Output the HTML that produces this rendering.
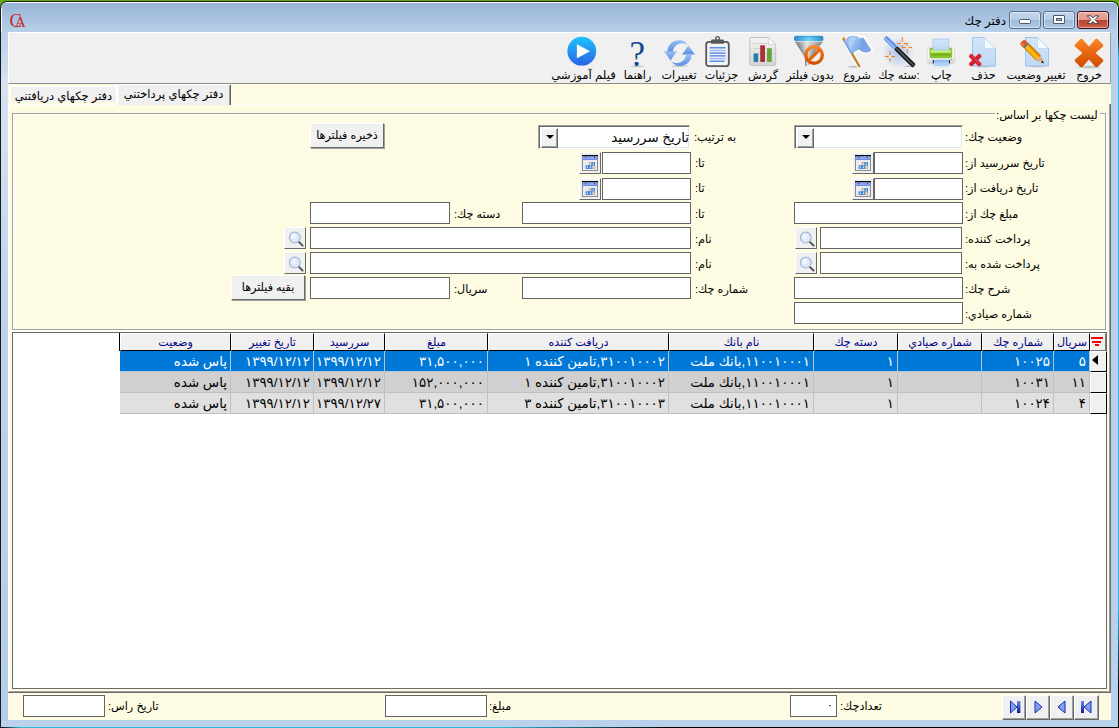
<!DOCTYPE html>
<html lang="fa"><head><meta charset="utf-8"><title>دفتر چك</title><style>
html,body{margin:0;padding:0;}
body{width:1119px;height:728px;overflow:hidden;position:relative;background:#b9d1ea;
 font-family:"Liberation Sans","DejaVu Sans",sans-serif;font-size:11.2px;color:#000;}
div,span,svg{position:absolute;box-sizing:border-box;}
.t{white-space:nowrap;direction:rtl;line-height:14px;height:14px;}
.inp{background:#fff;border:1px solid #646464;}
.btn{background:#f0f0f0;border:1px solid;border-color:#fff #696969 #696969 #fff;box-shadow:1px 1px 0 #a0a0a0;}
.btn2{background:#f0f0f0;border:1px solid;border-color:#fff #696969 #696969 #fff;}
.btxt{width:100%;text-align:center;direction:rtl;line-height:14px;white-space:nowrap;}
.hd{background:#f0f0f0;border:1px solid;border-color:#fff #000 #000 #fff;color:#000080;text-align:center;direction:rtl;line-height:16px;white-space:nowrap;overflow:hidden;}
.c{font-size:13.4px;line-height:22px;direction:rtl;text-align:right;white-space:nowrap;overflow:hidden;border-right:1px solid #c0c0c0;border-bottom:1px solid #c0c0c0;padding-right:3px;}
.tl{width:120px;text-align:center;direction:rtl;white-space:nowrap;line-height:14px;height:14px;top:68px;}
</style></head><body>
<div style="left:0;top:0;width:1119px;height:2px;background:linear-gradient(#6db30f,#4f9a0a)"></div>
<div style="left:0;top:0;width:9px;height:9px;background:#63ab0d"></div>
<div style="left:1110px;top:0;width:9px;height:9px;background:#63ab0d"></div>
<div style="left:0;top:1px;width:1119px;height:727px;background:#1a1a1a;border-radius:7px 7px 0 0"></div>
<div style="left:1px;top:2px;width:1117px;height:725px;background:#fff;border-radius:6px 6px 0 0"></div>
<div style="left:1px;top:3px;width:1117px;height:724px;background:linear-gradient(#98b3d3 0px,#a9c3e0 16px,#b9d1ea 30px,#b9d1ea 100%);border-radius:5px 5px 0 0"></div>
<div style="left:1px;top:8px;width:1px;height:400px;background:linear-gradient(#fff,rgba(255,255,255,.0))"></div>
<div style="left:1117px;top:7px;width:1px;height:60px;background:linear-gradient(#d8f2fc,rgba(200,236,250,0))"></div>
<div style="left:1px;top:32px;width:7px;height:688px;background:linear-gradient(#b9d1ea 0,#d4e2f2 50px,#d0dff1 120px,#bcd3eb 300px,#b4cde9 100%)"></div>
<div style="left:1118px;top:8px;width:1px;height:719px;background:linear-gradient(#000 0,#000 28px,#35b5e5 50px,#35b5e5 600px,#000 680px,#000 100%)"></div>
<div style="left:0;top:727px;width:1119px;height:1px;background:linear-gradient(90deg,#000 0,#2fb5d5 20px,#2fb5d5 45%,#000 60%)"></div>
<svg style="left:8px;top:9px" width="24" height="22" viewBox="0 0 24 22"><g font-family="Liberation Serif,serif" fill="#c9252c"><text x="1.4" y="17.6" font-size="18.5">C</text><text x="6.8" y="17.6" font-size="15.5">A</text></g></svg>
<div class="t" style="left:940px;width:66px;top:13px;font-size:11.8px;line-height:16px;height:16px;text-align:right">دفتر چك</div>
<div style="left:1009px;top:11px;width:32px;height:18px;border:1px solid #5a6f8c;border-radius:3px;background:linear-gradient(#c3d6ec 0,#b6cce6 48%,#9fb9d8 52%,#b3cae5 100%);box-shadow:inset 0 0 0 1px rgba(255,255,255,.45)"><div style="left:9px;top:7px;width:12px;height:5px;background:#fff;border:1px solid #4a5a70;border-radius:1.5px"></div></div>
<div style="left:1043px;top:11px;width:32px;height:18px;border:1px solid #5a6f8c;border-radius:3px;background:linear-gradient(#c3d6ec 0,#b6cce6 48%,#9fb9d8 52%,#b3cae5 100%);box-shadow:inset 0 0 0 1px rgba(255,255,255,.45)"><div style="left:9px;top:3px;width:12px;height:9px;background:#fff;border:1px solid #4a5a70;border-radius:1px"></div><div style="left:12px;top:6px;width:6px;height:3px;background:#a8c0dc;border:1px solid #4a5a70"></div></div>
<div style="left:1077px;top:11px;width:32px;height:18px;border:1px solid #3f1019;border-radius:3px;background:linear-gradient(#e9a99b 0,#e39a89 48%,#b9432b 52%,#c8604a 100%);box-shadow:inset 0 0 0 1px rgba(255,255,255,.45)"><svg style="left:8px;top:3px" width="14" height="10" viewBox="0 0 14 10"><path d="M1.2 0.8 L4.9 0.8 L7 2.9 L9.1 0.8 L12.8 0.8 L9 4.7 L12.8 8.6 L9.1 8.6 L7 6.5 L4.9 8.6 L1.2 8.6 L5 4.7 Z" fill="#fff" stroke="#4a3a44" stroke-width="1" stroke-linejoin="round"/></svg></div>
<div id="client" style="left:8px;top:32px;width:1103px;height:688px;background:#fdfbe2"></div>
<div style="left:8px;top:32px;width:1103px;height:52px;background:#f0f0f0;border-top:1px solid #fff;border-left:1px solid #fff;border-bottom:1px solid #8c8c8c;border-right:1px solid #a0a0a0"></div>
<div class="tl" style="left:1029px">خروج</div>
<div class="tl" style="left:976px">تغيير وضعيت</div>
<div class="tl" style="left:923.5px">حذف</div>
<div class="tl" style="left:881.5px">چاپ</div>
<div class="tl" style="left:839px">:سته چك</div>
<div class="tl" style="left:797px">شروع</div>
<div class="tl" style="left:750px">بدون فيلتر</div>
<div class="tl" style="left:703px">گردش</div>
<div class="tl" style="left:661.5px">جزئيات</div>
<div class="tl" style="left:619px">تغييرات</div>
<div class="tl" style="left:577.5px">راهنما</div>
<div class="tl" style="left:523.5px;font-size:11.7px">فيلم آموزشي</div>
<div style="left:10px;top:86px;width:107px;height:16px;background:#f0f0f0;border-top:1px solid #fff;border-left:1px solid #fff;border-right:1px solid #fff"><div class="btxt" style="top:1.5px;font-size:11.5px">دفتر چکهاي دريافتني</div></div>
<div style="left:8px;top:104px;width:1102px;height:1px;background:#fff"></div>
<div style="left:8px;top:104px;width:1px;height:587px;background:#fff"></div>
<div style="left:1109px;top:104px;width:1px;height:588px;background:#a0a0a0"></div>
<div style="left:1110px;top:104px;width:1px;height:589px;background:#696969"></div>
<div style="left:117px;top:84px;width:114px;height:21px;background:#f0f0f0;border-top:1px solid #fff;border-left:1px solid #fff"><div class="btxt" style="top:1.5px;left:-1px;font-size:11.5px">دفتر چکهاي پرداختني</div><div style="right:1px;top:0px;width:1px;height:20px;background:#a0a0a0"></div><div style="right:0;top:0;width:1px;height:20px;background:#606060"></div></div>
<div style="left:12px;top:113px;width:1095px;height:218px;border:1px solid #fff"></div>
<div style="left:12px;top:113px;width:1094px;height:217px;border:1px solid #a0a0a0"></div>
<div style="left:13px;top:114px;width:1092px;height:1px;background:#fff"></div>
<div style="left:13px;top:114px;width:1px;height:215px;background:#fff"></div>
<div class="t" style="left:995px;top:108px;padding:0 2px 0 1px;background:#fdfbe2;font-size:11.3px">ليست چكها بر اساس:</div>
<div style="left:794px;top:125px;width:169px;height:24px;background:#fff;border:1px solid;border-color:#a0a0a0 #fff #fff #a0a0a0;box-shadow:inset 1px 1px 0 #696969, inset -1px -1px 0 #e3e3e3"><div style="left:2px;top:2px;width:17px;height:20px;background:#f0f0f0;border:1px solid;border-color:#fff #696969 #696969 #fff;box-shadow:inset -1px -1px 0 #a0a0a0"><div style="left:4px;top:6px;width:0;height:0;border-left:4px solid transparent;border-right:4px solid transparent;border-top:4px solid #000"></div></div></div>
<div style="left:538px;top:125px;width:152px;height:24px;background:#fff;border:1px solid;border-color:#a0a0a0 #fff #fff #a0a0a0;box-shadow:inset 1px 1px 0 #696969, inset -1px -1px 0 #e3e3e3"><div style="left:2px;top:2px;width:17px;height:20px;background:#f0f0f0;border:1px solid;border-color:#fff #696969 #696969 #fff;box-shadow:inset -1px -1px 0 #a0a0a0"><div style="left:4px;top:6px;width:0;height:0;border-left:4px solid transparent;border-right:4px solid transparent;border-top:4px solid #000"></div></div><div class="t" style="right:0px;top:4px;font-size:13.4px;line-height:16px;height:16px">تاريخ سررسيد</div></div>
<div class="t" style="left:965px;top:130px;">وضعيت چك:</div>
<div class="t" style="left:694px;top:130px;">به ترتيب:</div>
<div class="btn" style="left:310px;top:123px;width:74px;height:25px"><div class="btxt" style="top:4px">ذخيره فيلترها</div></div>
<div class="inp" style="left:874px;top:152px;width:89px;height:22px;"></div>
<div class="btn2" style="left:852px;top:152px;width:22px;height:22px"><svg style="left:2px;top:2px" width="16" height="16" viewBox="0 0 16 16"><rect x="0.5" y="0.5" width="15" height="15" fill="#ececec" stroke="#8c8c8c"/><rect x="0" y="0" width="16" height="1.3" fill="#000"/><rect x="0.5" y="1.3" width="15" height="3.7" fill="#6d8ce4"/><rect x="1" y="2.6" width="14" height="1" fill="#a6b9f2"/><rect x="3.2" y="0.6" width="1" height="2.6" fill="#555"/><rect x="12" y="0.6" width="1" height="2.6" fill="#555"/><rect x="6.6" y="7.2" width="3.4" height="3.4" fill="#a9a9a9"/><rect x="7.699999999999999" y="8.3" width="1.3" height="1.3" fill="#fff"/><rect x="9.6" y="7.2" width="3.4" height="3.4" fill="#2e7bd6"/><rect x="10.7" y="8.3" width="1.3" height="1.3" fill="#fff"/><rect x="3.6" y="10.4" width="3.4" height="3.4" fill="#2e7bd6"/><rect x="4.7" y="11.5" width="1.3" height="1.3" fill="#fff"/><rect x="6.6" y="10.4" width="3.4" height="3.4" fill="#2e7bd6"/><rect x="7.699999999999999" y="11.5" width="1.3" height="1.3" fill="#fff"/><rect x="9.6" y="10.4" width="3.4" height="3.4" fill="#a9a9a9"/><rect x="10.7" y="11.5" width="1.3" height="1.3" fill="#fff"/></svg></div>
<div class="t" style="left:965px;top:156px;">تاريخ سررسيد از:</div>
<div class="inp" style="left:602px;top:152px;width:89px;height:22px;"></div>
<div class="btn2" style="left:579px;top:152px;width:22px;height:22px"><svg style="left:2px;top:2px" width="16" height="16" viewBox="0 0 16 16"><rect x="0.5" y="0.5" width="15" height="15" fill="#ececec" stroke="#8c8c8c"/><rect x="0" y="0" width="16" height="1.3" fill="#000"/><rect x="0.5" y="1.3" width="15" height="3.7" fill="#6d8ce4"/><rect x="1" y="2.6" width="14" height="1" fill="#a6b9f2"/><rect x="3.2" y="0.6" width="1" height="2.6" fill="#555"/><rect x="12" y="0.6" width="1" height="2.6" fill="#555"/><rect x="6.6" y="7.2" width="3.4" height="3.4" fill="#a9a9a9"/><rect x="7.699999999999999" y="8.3" width="1.3" height="1.3" fill="#fff"/><rect x="9.6" y="7.2" width="3.4" height="3.4" fill="#2e7bd6"/><rect x="10.7" y="8.3" width="1.3" height="1.3" fill="#fff"/><rect x="3.6" y="10.4" width="3.4" height="3.4" fill="#2e7bd6"/><rect x="4.7" y="11.5" width="1.3" height="1.3" fill="#fff"/><rect x="6.6" y="10.4" width="3.4" height="3.4" fill="#2e7bd6"/><rect x="7.699999999999999" y="11.5" width="1.3" height="1.3" fill="#fff"/><rect x="9.6" y="10.4" width="3.4" height="3.4" fill="#a9a9a9"/><rect x="10.7" y="11.5" width="1.3" height="1.3" fill="#fff"/></svg></div>
<div class="t" style="left:695px;top:156px;">تا:</div>
<div class="inp" style="left:874px;top:178px;width:89px;height:22px;"></div>
<div class="btn2" style="left:852px;top:178px;width:22px;height:22px"><svg style="left:2px;top:2px" width="16" height="16" viewBox="0 0 16 16"><rect x="0.5" y="0.5" width="15" height="15" fill="#ececec" stroke="#8c8c8c"/><rect x="0" y="0" width="16" height="1.3" fill="#000"/><rect x="0.5" y="1.3" width="15" height="3.7" fill="#6d8ce4"/><rect x="1" y="2.6" width="14" height="1" fill="#a6b9f2"/><rect x="3.2" y="0.6" width="1" height="2.6" fill="#555"/><rect x="12" y="0.6" width="1" height="2.6" fill="#555"/><rect x="6.6" y="7.2" width="3.4" height="3.4" fill="#a9a9a9"/><rect x="7.699999999999999" y="8.3" width="1.3" height="1.3" fill="#fff"/><rect x="9.6" y="7.2" width="3.4" height="3.4" fill="#2e7bd6"/><rect x="10.7" y="8.3" width="1.3" height="1.3" fill="#fff"/><rect x="3.6" y="10.4" width="3.4" height="3.4" fill="#2e7bd6"/><rect x="4.7" y="11.5" width="1.3" height="1.3" fill="#fff"/><rect x="6.6" y="10.4" width="3.4" height="3.4" fill="#2e7bd6"/><rect x="7.699999999999999" y="11.5" width="1.3" height="1.3" fill="#fff"/><rect x="9.6" y="10.4" width="3.4" height="3.4" fill="#a9a9a9"/><rect x="10.7" y="11.5" width="1.3" height="1.3" fill="#fff"/></svg></div>
<div class="t" style="left:965px;top:181px;">تاريخ دريافت از:</div>
<div class="inp" style="left:602px;top:178px;width:89px;height:22px;"></div>
<div class="btn2" style="left:579px;top:178px;width:22px;height:22px"><svg style="left:2px;top:2px" width="16" height="16" viewBox="0 0 16 16"><rect x="0.5" y="0.5" width="15" height="15" fill="#ececec" stroke="#8c8c8c"/><rect x="0" y="0" width="16" height="1.3" fill="#000"/><rect x="0.5" y="1.3" width="15" height="3.7" fill="#6d8ce4"/><rect x="1" y="2.6" width="14" height="1" fill="#a6b9f2"/><rect x="3.2" y="0.6" width="1" height="2.6" fill="#555"/><rect x="12" y="0.6" width="1" height="2.6" fill="#555"/><rect x="6.6" y="7.2" width="3.4" height="3.4" fill="#a9a9a9"/><rect x="7.699999999999999" y="8.3" width="1.3" height="1.3" fill="#fff"/><rect x="9.6" y="7.2" width="3.4" height="3.4" fill="#2e7bd6"/><rect x="10.7" y="8.3" width="1.3" height="1.3" fill="#fff"/><rect x="3.6" y="10.4" width="3.4" height="3.4" fill="#2e7bd6"/><rect x="4.7" y="11.5" width="1.3" height="1.3" fill="#fff"/><rect x="6.6" y="10.4" width="3.4" height="3.4" fill="#2e7bd6"/><rect x="7.699999999999999" y="11.5" width="1.3" height="1.3" fill="#fff"/><rect x="9.6" y="10.4" width="3.4" height="3.4" fill="#a9a9a9"/><rect x="10.7" y="11.5" width="1.3" height="1.3" fill="#fff"/></svg></div>
<div class="t" style="left:695px;top:181px;">تا:</div>
<div class="inp" style="left:794px;top:202px;width:169px;height:22px;"></div>
<div class="t" style="left:965px;top:207px;">مبلغ چك از:</div>
<div class="inp" style="left:522px;top:202px;width:169px;height:22px;"></div>
<div class="t" style="left:695px;top:207px;">تا:</div>
<div class="inp" style="left:310px;top:202px;width:140px;height:22px;"></div>
<div class="t" style="left:454px;top:207px;">دسته چك:</div>
<div class="inp" style="left:820px;top:227px;width:142px;height:22px;"></div>
<div class="btn2" style="left:795px;top:227px;width:22px;height:22px"><svg style="left:0;top:0" width="21" height="21" viewBox="0 0 21 21"><line x1="13.6" y1="13.6" x2="17.6" y2="17.6" stroke="#4e4e4e" stroke-width="1.9" stroke-linecap="round"/><circle cx="9.8" cy="9.6" r="5.4" fill="#dde8f9" stroke="#a4b8d4" stroke-width="1.2"/><circle cx="8.8" cy="8.4" r="2.6" fill="#f4f8ff" opacity=".8"/></svg></div>
<div class="t" style="left:965px;top:232px;">پرداخت كننده:</div>
<div class="inp" style="left:310px;top:227px;width:381px;height:22px;"></div>
<div class="btn2" style="left:284px;top:227px;width:22px;height:22px"><svg style="left:0;top:0" width="21" height="21" viewBox="0 0 21 21"><line x1="13.6" y1="13.6" x2="17.6" y2="17.6" stroke="#4e4e4e" stroke-width="1.9" stroke-linecap="round"/><circle cx="9.8" cy="9.6" r="5.4" fill="#dde8f9" stroke="#a4b8d4" stroke-width="1.2"/><circle cx="8.8" cy="8.4" r="2.6" fill="#f4f8ff" opacity=".8"/></svg></div>
<div class="t" style="left:695px;top:232px;">نام:</div>
<div class="inp" style="left:820px;top:252px;width:142px;height:22px;"></div>
<div class="btn2" style="left:795px;top:252px;width:22px;height:22px"><svg style="left:0;top:0" width="21" height="21" viewBox="0 0 21 21"><line x1="13.6" y1="13.6" x2="17.6" y2="17.6" stroke="#4e4e4e" stroke-width="1.9" stroke-linecap="round"/><circle cx="9.8" cy="9.6" r="5.4" fill="#dde8f9" stroke="#a4b8d4" stroke-width="1.2"/><circle cx="8.8" cy="8.4" r="2.6" fill="#f4f8ff" opacity=".8"/></svg></div>
<div class="t" style="left:965px;top:257px;">پرداخت شده به:</div>
<div class="inp" style="left:310px;top:252px;width:381px;height:22px;"></div>
<div class="btn2" style="left:284px;top:252px;width:22px;height:22px"><svg style="left:0;top:0" width="21" height="21" viewBox="0 0 21 21"><line x1="13.6" y1="13.6" x2="17.6" y2="17.6" stroke="#4e4e4e" stroke-width="1.9" stroke-linecap="round"/><circle cx="9.8" cy="9.6" r="5.4" fill="#dde8f9" stroke="#a4b8d4" stroke-width="1.2"/><circle cx="8.8" cy="8.4" r="2.6" fill="#f4f8ff" opacity=".8"/></svg></div>
<div class="t" style="left:695px;top:257px;">نام:</div>
<div class="inp" style="left:794px;top:277px;width:169px;height:22px;"></div>
<div class="t" style="left:965px;top:282px;">شرح چك:</div>
<div class="inp" style="left:522px;top:277px;width:169px;height:22px;"></div>
<div class="t" style="left:695px;top:282px;">شماره چك:</div>
<div class="inp" style="left:310px;top:277px;width:140px;height:22px;"></div>
<div class="t" style="left:454px;top:282px;">سريال:</div>
<div class="btn" style="left:231px;top:275px;width:74px;height:25px"><div class="btxt" style="top:4px">بقيه فيلترها</div></div>
<div class="inp" style="left:794px;top:302px;width:169px;height:22px;"></div>
<div class="t" style="left:965px;top:307px;">شماره صيادي:</div>
<div style="left:12px;top:332px;width:1095px;height:357px;background:#fff;border:1px solid #696969;border-right-color:#696969;border-bottom-color:#696969"></div>
<div class="hd" style="left:1090px;top:333px;width:16px;height:18px;border-color:#fff #7a7a7a #7a7a7a #fff"><div style="left:0px;top:3px;width:12px;height:2px;background:#f00"></div><div style="left:1px;top:7px;width:9px;height:2px;background:#f00"></div><div style="left:4px;top:10px;width:4px;height:2px;background:#f00"></div></div>
<div class="hd" style="left:1054px;top:333px;width:36px;height:18px">سريال</div>
<div class="hd" style="left:982px;top:333px;width:72px;height:18px">شماره چك</div>
<div class="hd" style="left:898px;top:333px;width:84px;height:18px">شماره صيادي</div>
<div class="hd" style="left:814px;top:333px;width:84px;height:18px">دسته چك</div>
<div class="hd" style="left:669px;top:333px;width:145px;height:18px">نام بانك</div>
<div class="hd" style="left:488px;top:333px;width:181px;height:18px">دريافت كننده</div>
<div class="hd" style="left:385px;top:333px;width:103px;height:18px">مبلغ</div>
<div class="hd" style="left:314px;top:333px;width:71px;height:18px">سررسيد</div>
<div class="hd" style="left:231px;top:333px;width:83px;height:18px">تاريخ تغيير</div>
<div class="hd" style="left:120px;top:333px;width:111px;height:18px">وضعيت</div>
<div style="left:119px;top:333px;width:1px;height:18px;background:#000"></div>
<div style="left:1090px;top:351px;width:17px;height:21px;background:#f0f0f0;border:1px solid;border-color:#fff #000 #000 #fff"><div style="left:1px;top:3px;width:0;height:0;border-top:5.5px solid transparent;border-bottom:5.5px solid transparent;border-right:6px solid #000"></div></div>
<div class="c" style="left:1054px;top:351px;width:36px;height:21px;background:#0078d7;color:#fff;border-color:#b4c4d4">۵</div>
<div class="c" style="left:982px;top:351px;width:72px;height:21px;background:#0078d7;color:#fff;border-color:#b4c4d4">۱۰۰۲۵</div>
<div class="c" style="left:898px;top:351px;width:84px;height:21px;background:#0078d7;color:#fff;border-color:#b4c4d4"></div>
<div class="c" style="left:814px;top:351px;width:84px;height:21px;background:#0078d7;color:#fff;border-color:#b4c4d4">۱</div>
<div class="c" style="left:669px;top:351px;width:145px;height:21px;background:#0078d7;color:#fff;border-color:#b4c4d4">۱۱۰۰۱۰۰۰۱,بانك ملت</div>
<div class="c" style="left:488px;top:351px;width:181px;height:21px;background:#0078d7;color:#fff;border-color:#b4c4d4">۳۱۰۰۱۰۰۰۲,تامين كننده ۱</div>
<div class="c" style="left:385px;top:351px;width:103px;height:21px;background:#0078d7;color:#fff;border-color:#b4c4d4">۳۱,۵۰۰,۰۰۰</div>
<div class="c" style="left:314px;top:351px;width:71px;height:21px;background:#0078d7;color:#fff;border-color:#b4c4d4">۱۳۹۹/۱۲/۱۲</div>
<div class="c" style="left:231px;top:351px;width:83px;height:21px;background:#0078d7;color:#fff;border-color:#b4c4d4">۱۳۹۹/۱۲/۱۲</div>
<div class="c" style="left:120px;top:351px;width:111px;height:21px;background:#0078d7;color:#fff;border-color:#b4c4d4">پاس شده</div>
<div style="left:1090px;top:372px;width:17px;height:21px;background:#f0f0f0;border:1px solid;border-color:#fff #000 #000 #fff"></div>
<div class="c" style="left:1054px;top:372px;width:36px;height:21px;background:#d0d0d0;color:#000;border-color:#c0c0c0">۱۱</div>
<div class="c" style="left:982px;top:372px;width:72px;height:21px;background:#d0d0d0;color:#000;border-color:#c0c0c0">۱۰۰۳۱</div>
<div class="c" style="left:898px;top:372px;width:84px;height:21px;background:#d0d0d0;color:#000;border-color:#c0c0c0"></div>
<div class="c" style="left:814px;top:372px;width:84px;height:21px;background:#d0d0d0;color:#000;border-color:#c0c0c0">۱</div>
<div class="c" style="left:669px;top:372px;width:145px;height:21px;background:#d0d0d0;color:#000;border-color:#c0c0c0">۱۱۰۰۱۰۰۰۱,بانك ملت</div>
<div class="c" style="left:488px;top:372px;width:181px;height:21px;background:#d0d0d0;color:#000;border-color:#c0c0c0">۳۱۰۰۱۰۰۰۲,تامين كننده ۱</div>
<div class="c" style="left:385px;top:372px;width:103px;height:21px;background:#d0d0d0;color:#000;border-color:#c0c0c0">۱۵۲,۰۰۰,۰۰۰</div>
<div class="c" style="left:314px;top:372px;width:71px;height:21px;background:#d0d0d0;color:#000;border-color:#c0c0c0">۱۳۹۹/۱۲/۱۲</div>
<div class="c" style="left:231px;top:372px;width:83px;height:21px;background:#d0d0d0;color:#000;border-color:#c0c0c0">۱۳۹۹/۱۲/۱۲</div>
<div class="c" style="left:120px;top:372px;width:111px;height:21px;background:#d0d0d0;color:#000;border-color:#c0c0c0">پاس شده</div>
<div style="left:1090px;top:393px;width:17px;height:21px;background:#f0f0f0;border:1px solid;border-color:#fff #000 #000 #fff"></div>
<div class="c" style="left:1054px;top:393px;width:36px;height:21px;background:#e0e0e0;color:#000;border-color:#c0c0c0">۴</div>
<div class="c" style="left:982px;top:393px;width:72px;height:21px;background:#e0e0e0;color:#000;border-color:#c0c0c0">۱۰۰۲۴</div>
<div class="c" style="left:898px;top:393px;width:84px;height:21px;background:#e0e0e0;color:#000;border-color:#c0c0c0"></div>
<div class="c" style="left:814px;top:393px;width:84px;height:21px;background:#e0e0e0;color:#000;border-color:#c0c0c0">۱</div>
<div class="c" style="left:669px;top:393px;width:145px;height:21px;background:#e0e0e0;color:#000;border-color:#c0c0c0">۱۱۰۰۱۰۰۰۱,بانك ملت</div>
<div class="c" style="left:488px;top:393px;width:181px;height:21px;background:#e0e0e0;color:#000;border-color:#c0c0c0">۳۱۰۰۱۰۰۰۳,تامين كننده ۳</div>
<div class="c" style="left:385px;top:393px;width:103px;height:21px;background:#e0e0e0;color:#000;border-color:#c0c0c0">۳۱,۵۰۰,۰۰۰</div>
<div class="c" style="left:314px;top:393px;width:71px;height:21px;background:#e0e0e0;color:#000;border-color:#c0c0c0">۱۳۹۹/۱۲/۲۷</div>
<div class="c" style="left:231px;top:393px;width:83px;height:21px;background:#e0e0e0;color:#000;border-color:#c0c0c0">۱۳۹۹/۱۲/۱۲</div>
<div class="c" style="left:120px;top:393px;width:111px;height:21px;background:#e0e0e0;color:#000;border-color:#c0c0c0">پاس شده</div>
<div style="left:9px;top:691px;width:1101px;height:1px;background:#a0a0a0"></div>
<div style="left:8px;top:692px;width:1103px;height:1px;background:#696969"></div>
<div class="inp" style="left:23px;top:695px;width:82px;height:22px;"></div>
<div class="t" style="left:108px;top:699px;">تاريخ راس:</div>
<div class="inp" style="left:385px;top:695px;width:102px;height:22px;"></div>
<div class="t" style="left:489px;top:699px;">مبلغ:</div>
<div class="inp" style="left:790px;top:695px;width:47px;height:22px;"></div>
<div class="t" style="left:840px;top:699px;">تعدادچك:</div>
<div class="t" style="left:827px;top:697.5px;font-size:11px">۰</div>
<div style="left:1002px;top:695px;width:24px;height:25px;background:#f0f0f0;border-right:1px solid #696969;border-bottom:1px solid #696969;border-left:1px solid #fff;border-top:1px solid #fff;box-shadow:inset -1px -1px 0 #a0a0a0"><svg style="left:0;top:0px" width="22" height="22" viewBox="0 0 22 22"><defs><linearGradient id="ng" x1="0" y1="0" x2="0" y2="1"><stop offset="0" stop-color="#6a8ae8"/><stop offset="1" stop-color="#0a1a9a"/></linearGradient></defs><path d="M7.5 5 L14 11 L7.5 17 Z" fill="#7fa0f0" stroke="#1a2ab0" stroke-width="1"/><rect x="14" y="5" width="3.4" height="12" fill="url(#ng)"/></svg></div>
<div style="left:1026px;top:695px;width:24px;height:25px;background:#f0f0f0;border-right:1px solid #696969;border-bottom:1px solid #696969;border-left:1px solid #fff;border-top:1px solid #fff;box-shadow:inset -1px -1px 0 #a0a0a0"><svg style="left:0;top:0px" width="22" height="22" viewBox="0 0 22 22"><defs><linearGradient id="ng" x1="0" y1="0" x2="0" y2="1"><stop offset="0" stop-color="#6a8ae8"/><stop offset="1" stop-color="#0a1a9a"/></linearGradient></defs><path d="M8 5 L15 11 L8 17 Z" fill="#7fa0f0" stroke="#1a2ab0" stroke-width="1"/></svg></div>
<div style="left:1050px;top:695px;width:24px;height:25px;background:#f0f0f0;border-right:1px solid #696969;border-bottom:1px solid #696969;border-left:1px solid #fff;border-top:1px solid #fff;box-shadow:inset -1px -1px 0 #a0a0a0"><svg style="left:0;top:0px" width="22" height="22" viewBox="0 0 22 22"><defs><linearGradient id="ng" x1="0" y1="0" x2="0" y2="1"><stop offset="0" stop-color="#6a8ae8"/><stop offset="1" stop-color="#0a1a9a"/></linearGradient></defs><path d="M14 5 L7 11 L14 17 Z" fill="#7fa0f0" stroke="#1a2ab0" stroke-width="1"/></svg></div>
<div style="left:1074px;top:695px;width:25px;height:25px;background:#f0f0f0;border-right:1px solid #696969;border-bottom:1px solid #696969;border-left:1px solid #fff;border-top:1px solid #fff;box-shadow:inset -1px -1px 0 #a0a0a0"><svg style="left:0;top:0px" width="22" height="22" viewBox="0 0 22 22"><defs><linearGradient id="ng" x1="0" y1="0" x2="0" y2="1"><stop offset="0" stop-color="#6a8ae8"/><stop offset="1" stop-color="#0a1a9a"/></linearGradient></defs><rect x="6" y="5" width="3" height="12" fill="url(#ng)"/><path d="M16 5 L9 11 L16 17 Z" fill="#7fa0f0" stroke="#1a2ab0" stroke-width="1"/></svg></div>
<svg style="left:0;top:0" width="0" height="0"><defs>
<linearGradient id="gx" x1="0" y1="0" x2="0" y2="1"><stop offset="0" stop-color="#f58a2a"/><stop offset="0.5" stop-color="#e9650d"/><stop offset="1" stop-color="#cf4d00"/></linearGradient>
<linearGradient id="gdoc" x1="0" y1="0" x2="0" y2="1"><stop offset="0" stop-color="#d3e6f9"/><stop offset="1" stop-color="#bfd9f4"/></linearGradient>
<linearGradient id="gpen" x1="0" y1="0" x2="1" y2="0"><stop offset="0" stop-color="#d87a00"/><stop offset="0.35" stop-color="#ffc21a"/><stop offset="0.6" stop-color="#ffb000"/><stop offset="1" stop-color="#c86400"/></linearGradient>
<linearGradient id="gplay" x1="0" y1="0" x2="0" y2="1"><stop offset="0" stop-color="#1cc4fb"/><stop offset="1" stop-color="#2a62e6"/></linearGradient>
<linearGradient id="ggreen" x1="0" y1="0" x2="0" y2="1"><stop offset="0" stop-color="#a6dc3c"/><stop offset="0.5" stop-color="#7cbf1e"/><stop offset="1" stop-color="#8fd02c"/></linearGradient>
<linearGradient id="gfun" x1="0" y1="0" x2="1" y2="0"><stop offset="0" stop-color="#6f7478"/><stop offset="0.42" stop-color="#e2e3e4"/><stop offset="0.6" stop-color="#c4c6c8"/><stop offset="1" stop-color="#7c8084"/></linearGradient>
<linearGradient id="gfunt" x1="0" y1="0" x2="1" y2="0"><stop offset="0" stop-color="#2a88c8"/><stop offset="0.5" stop-color="#6fd4f6"/><stop offset="1" stop-color="#2a88c8"/></linearGradient>
<linearGradient id="gflag" x1="0" y1="0" x2="1" y2="0.35"><stop offset="0" stop-color="#7fabe9"/><stop offset="0.28" stop-color="#b4d5f8"/><stop offset="0.5" stop-color="#8db6ee"/><stop offset="0.75" stop-color="#7aa6e6"/><stop offset="1" stop-color="#8ab2ec"/></linearGradient>
<linearGradient id="gref" x1="0" y1="0" x2="0" y2="1"><stop offset="0" stop-color="#9cc0f6"/><stop offset="1" stop-color="#5c8fe4"/></linearGradient>
<linearGradient id="gchart" x1="0" y1="0" x2="0" y2="1"><stop offset="0" stop-color="#f4f4f4"/><stop offset="1" stop-color="#d4d4d4"/></linearGradient>
<linearGradient id="gprb" x1="0" y1="0" x2="0" y2="1"><stop offset="0" stop-color="#ffffff"/><stop offset="0.6" stop-color="#f6f6f6"/><stop offset="1" stop-color="#d2d2d2"/></linearGradient>
<linearGradient id="gprp" x1="0" y1="0" x2="0" y2="1"><stop offset="0" stop-color="#86b0ea"/><stop offset="0.4" stop-color="#a8ccf6"/><stop offset="1" stop-color="#b8d8fa"/></linearGradient>
<radialGradient id="gglow"><stop offset="0" stop-color="#aec6ee" stop-opacity="1"/><stop offset="0.6" stop-color="#c8d6ee" stop-opacity="0.7"/><stop offset="1" stop-color="#e4e8f0" stop-opacity="0"/></radialGradient>
<radialGradient id="gsh"><stop offset="0" stop-color="#000" stop-opacity="0.28"/><stop offset="1" stop-color="#000" stop-opacity="0"/></radialGradient>
</defs></svg>
<svg style="left:1072px;top:36px" width="34" height="34" viewBox="0 0 34 34"><ellipse cx="17" cy="31" rx="14" ry="2" fill="url(#gsh)"/><g transform="translate(17 17)"><g fill="url(#gx)"><path d="M-14 -8.5 L-8.5 -14 Q-7.5 -14.6 -6.5 -14 L0 -6.5 L6.5 -14 Q7.5 -14.6 8.5 -14 L14 -8.5 Q14.6 -7.5 14 -6.5 L6.5 0 L14 6.5 Q14.6 7.5 14 8.5 L8.5 14 Q7.5 14.6 6.5 14 L0 6.5 L-6.5 14 Q-7.5 14.6 -8.5 14 L-14 8.5 Q-14.6 7.5 -14 6.5 L-6.5 0 L-14 -6.5 Q-14.6 -7.5 -14 -8.5 Z"/></g></g></svg>
<svg style="left:1018px;top:34px" width="36" height="36" viewBox="0 0 36 36"><ellipse cx="19" cy="32.6" rx="13" ry="1.2" fill="url(#gsh)"/><path d="M7.5 3.5 L19.5 3.5 L30.5 14.5 L30.5 32 L7.5 32 Z" fill="url(#gdoc)" stroke="#9fc4ee" stroke-width="1"/><path d="M19.5 3.5 L19.5 14.5 L30.5 14.5 Z" fill="#f4f9ff" stroke="#b4d2f2" stroke-width="0.6"/><g transform="translate(6.2 9.8) rotate(-45)"><rect x="-3.5" y="-3.4" width="7" height="6" rx="2.8" fill="#dc5a24"/><rect x="-2.6" y="-2.8" width="2" height="4.4" rx="1" fill="#f08a50" opacity=".7"/><rect x="-3.5" y="1.8" width="7" height="1.8" fill="#5f7472"/><rect x="-3.5" y="3.6" width="7" height="16.6" fill="url(#gpen)"/><path d="M-3.5 20.2 L3.5 20.2 L0 27.9 Z" fill="#dfa888"/><path d="M-1.3 25 L1.3 25 L0 27.9 Z" fill="#222"/></g></svg>
<svg style="left:966px;top:34px" width="34" height="36" viewBox="0 0 34 36"><ellipse cx="18" cy="32.6" rx="13" ry="1.2" fill="url(#gsh)"/><path d="M6.5 3.5 L18.5 3.5 L29.5 14.5 L29.5 32 L6.5 32 Z" fill="url(#gdoc)" stroke="#9fc4ee" stroke-width="1"/><path d="M18.5 3.5 L18.5 14.5 L29.5 14.5 Z" fill="#f4f9ff" stroke="#b4d2f2" stroke-width="0.6"/><g transform="translate(9.2 26.2) rotate(45)"><rect x="-7.6" y="-2.1" width="15.2" height="4.2" rx="1.4" fill="#d2222c"/><rect x="-2.1" y="-7.6" width="4.2" height="15.2" rx="1.4" fill="#d2222c"/><rect x="-6.5" y="-1.2" width="13" height="1" fill="#e85a60" opacity=".6"/></g></svg>
<svg style="left:924px;top:36px" width="34" height="34" viewBox="0 0 34 34"><ellipse cx="17" cy="27.6" rx="16" ry="1.6" fill="url(#gsh)"/><rect x="3.2" y="11.6" width="27.4" height="15.8" rx="3.2" fill="url(#gprb)" stroke="#cfcfcf" stroke-width=".7"/><path d="M5.9 12.4 L27.8 12.4 L27.8 20 Q27.8 21.8 26 21.8 L7.7 21.8 Q5.9 21.8 5.9 20 Z" fill="#86c428" stroke="#6fae18" stroke-width=".6"/><rect x="6.6" y="14" width="20.5" height="2.8" fill="#c6f072"/><rect x="7.6" y="17.2" width="18.6" height="2.6" rx=".6" fill="#76b21c"/><rect x="9" y="3" width="15.9" height="11" fill="url(#gdoc)" stroke="#9cc2ef" stroke-width=".7"/><rect x="8.8" y="24" width="17.2" height="3.4" fill="#2c2c2c"/><rect x="9.9" y="24" width="15" height="6.4" fill="url(#gprp)"/><circle cx="27.6" cy="23.4" r=".75" fill="#62a814"/></svg>
<svg style="left:880px;top:33px" width="38" height="38" viewBox="0 0 38 38"><circle cx="18" cy="19.5" r="17.5" fill="url(#gglow)"/><ellipse cx="28" cy="33.4" rx="6" ry="1.2" fill="url(#gsh)"/><g transform="translate(5.9 5.2) rotate(-45.5)"><rect x="-2.4" y="-1.4" width="4.8" height="15.4" rx="2" fill="#5b8fe0"/><rect x="-1.3" y="-0.8" width="1.4" height="14.4" fill="#a8c8f6"/><rect x="-2.4" y="13.6" width="4.8" height="26.2" rx="1.6" fill="#1a2020"/><rect x="-0.6" y="14" width="1.3" height="25" fill="#51625f"/></g><g stroke="#f07d1c" stroke-width="1" fill="none"><path d="M22.3 4 V15.5 M16.8 10.5 H27.8"/><path d="M27.2 10.5 V20.5 M22.2 14.5 H32"/><path d="M10 18.5 V28.5 M4.8 23.5 H15"/></g><circle cx="22.3" cy="10.5" r="1.3" fill="#fff"/><circle cx="27.2" cy="14.5" r="1.2" fill="#fff"/><circle cx="10" cy="23.5" r="1.2" fill="#fff"/></svg>
<svg style="left:838px;top:33px" width="38" height="38" viewBox="0 0 38 38"><ellipse cx="15.4" cy="33.8" rx="8" ry="1.5" fill="url(#gsh)"/><g stroke="#fff" stroke-width="4.2" stroke-linejoin="round" stroke-linecap="round" fill="#fff" opacity=".92"><path d="M8.2 6.3 C10 4.2 12 3.2 14.5 3.1 C17 3 19.5 3.4 21.5 5.5 C22.8 5.2 24 4.8 25.3 4.9 L33 17 C32 18.6 30.5 19.2 28.5 19.2 C25.5 19.2 23.5 18.4 21.7 16.6 C19.5 16.4 17.5 17.6 15.2 19.9 L13.6 20.3 Z"/><path d="M5.8 6 L21.4 33.2"/></g><path d="M5.8 6 L21.4 33.2" stroke="#c8822e" stroke-width="2.3" stroke-linecap="round"/><path d="M20.6 33.4 L5.2 6.6" stroke="#a8641c" stroke-width=".7" opacity=".6"/><path d="M6.6 7.4 L13.7 19.9" stroke="#78a6e8" stroke-width="2.5"/><path d="M7.3 7 L14.4 19.5" stroke="#a9c9f5" stroke-width=".8"/><circle cx="5.8" cy="5.9" r="1.6" fill="#d08a3a"/><path d="M8.2 6.3 C10 4.2 12 3.2 14.5 3.1 C17 3 19.5 3.4 21.5 5.5 C22.8 5.2 24 4.8 25.3 4.9 L33 17 C32 18.6 30.5 19.2 28.5 19.2 C25.5 19.2 23.5 18.4 21.7 16.6 C19.5 16.4 17.5 17.6 15.2 19.9 L13.6 20.3 Z" fill="url(#gflag)" stroke="#79a5e4" stroke-width=".5"/><path d="M21.5 5.5 C22.8 5.2 24 4.8 25.3 4.9 L33 17 C32 18.6 30.5 19.2 28.5 19.2 C25.5 19.2 23.5 18.4 21.7 16.6 C24 14 24 9 21.5 5.5 Z" fill="#6c9be0" opacity=".38"/></svg>
<svg style="left:790px;top:33px" width="38" height="38" viewBox="0 0 38 38"><path d="M4.60 8 L33.40 8 L31.27 10.8 L6.35 10.8 Z" fill="url(#gfun)"/><path d="M6.17 10.5 L31.50 10.5 L29.38 13.3 L7.92 13.3 Z" fill="url(#gfun)"/><path d="M7.73 13 L29.60 13 L27.48 15.8 L9.49 15.8 Z" fill="url(#gfun)"/><path d="M9.30 15.5 L27.71 15.5 L25.58 18.3 L11.05 18.3 Z" fill="url(#gfun)"/><path d="M10.87 18 L25.81 18 L23.68 20.8 L12.62 20.8 Z" fill="url(#gfun)"/><path d="M12.43 20.5 L23.91 20.5 L22.17 22.8 L13.87 22.8 Z" fill="url(#gfun)"/><path d="M13.68 22.5 L22.39 22.5 L20.57 24.900000000000002 L15.19 24.900000000000002 Z" fill="url(#gfun)"/><path d="M15 24.6 L20.8 24.6 L20.8 31 L15 33.6 Z" fill="url(#gfun)"/><path d="M4 4.8 Q4 2.8 6.8 2.8 L30.6 2.8 Q33.4 2.8 33.4 4.8 L33.4 6 Q33.4 8 30.6 8 L6.8 8 Q4 8 4 6 Z" fill="url(#gfunt)"/><rect x="5" y="3.2" width="27.4" height="1.2" fill="#2f8fd0" opacity=".6"/><rect x="4.6" y="8" width="28.8" height=".8" fill="#e6e6e6"/><circle cx="24.1" cy="22" r="8.25" fill="none" stroke="url(#gx)" stroke-width="3.4"/><path d="M18.5 27.8 L29.8 16.4" stroke="#e3660e" stroke-width="3.2"/></svg>
<svg style="left:746px;top:34px" width="34" height="35" viewBox="0 0 34 35"><path d="M3.8 4.6 Q3.8 3.4 5 3.4 L22.5 3.4 L29.7 10.5 L29.7 30 Q29.7 31.6 28.2 31.6 L5.4 31.6 Q3.8 31.6 3.8 30 Z" fill="url(#gchart)" stroke="#c2c2c2" stroke-width="1"/><path d="M22.5 3.5 L22.5 10.5 L29.5 10.5 Z" fill="#fbfbfb" stroke="#c8c8c8" stroke-width=".6"/><g stroke="#c9c9c9" stroke-width=".8"><path d="M7 9.5 H22 M7 14.5 H27 M7 19.5 H27"/></g><rect x="7.6" y="19.4" width="4.6" height="8.6" rx=".8" fill="#1f7fae"/><rect x="14.2" y="11.2" width="4.8" height="16.8" rx="1" fill="#ad3038"/><rect x="21" y="14.2" width="4.8" height="13.8" rx="1" fill="#62a63a"/></svg>
<svg style="left:702px;top:34px" width="32" height="36" viewBox="0 0 32 36"><rect x="4.2" y="7.8" width="22.6" height="24.4" rx="2.8" fill="#f3f3f3" stroke="#585858" stroke-width="1.8"/><circle cx="15.5" cy="4.6" r="1.9" fill="#f0f0f0" stroke="#585858" stroke-width="1.3"/><path d="M9 6.6 Q9 5.4 10.2 5.4 L20.8 5.4 Q22 5.4 22 6.6 L22 9.8 L9 9.8 Z" fill="#585858"/><g fill="#5d8df0"><rect x="7.6" y="13" width="16" height="1.5"/><rect x="7.6" y="15.7" width="16" height="1.5" opacity=".55"/><rect x="7.6" y="18.4" width="16" height="1.5"/><rect x="7.6" y="21.1" width="16" height="1.5"/><rect x="7.6" y="23.8" width="16" height="1.5" opacity=".55"/><rect x="7.6" y="26.5" width="15" height="1.5"/></g></svg>
<svg style="left:660px;top:36px" width="38" height="34" viewBox="0 0 38 34"><ellipse cx="19.5" cy="30" rx="11" ry="1.3" fill="url(#gsh)"/><g fill="url(#gref)"><path d="M3.9 15.3 L16.8 15.3 L10.6 24.6 Z"/><path d="M7.4 15.6 C7.4 9 12.5 4.2 19.3 4.2 C23 4.2 26 6.2 27.7 9.1 C25.8 7.6 23.8 7 21.8 7.2 C17 7.6 13.4 10.6 12.9 15.6 Z"/><path d="M22 18.5 L34.9 18.5 L28.4 9.5 Z"/><path d="M31.7 18.2 C31.7 25 26.5 29.9 19.8 29.9 C16 29.9 12.8 28 10.9 25 C12.8 26.5 15 27.2 17.3 27 C22 26.6 25.6 23.4 26 18.2 Z"/></g></svg>
<svg style="left:622px;top:36px" width="30" height="34" viewBox="0 0 30 34"><ellipse cx="15.5" cy="30.3" rx="9" ry="1.3" fill="url(#gsh)"/><text x="15.3" y="30" text-anchor="middle" font-family="Liberation Serif,serif" font-size="35" fill="#12478f">?</text></svg>
<svg style="left:565px;top:34px" width="34" height="34" viewBox="0 0 34 34"><circle cx="16.8" cy="17.2" r="14.4" fill="url(#gplay)"/><path d="M11.9 10.2 L25 17.2 L11.9 24.2 Z" fill="#fff"/></svg>
</body></html>
